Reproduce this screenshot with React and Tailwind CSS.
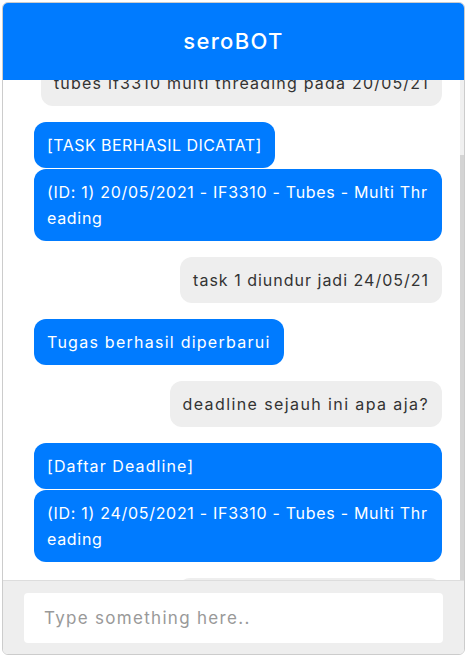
import { useEffect, useRef } from "react";

const font = { fontFamily: "Inter, 'Open Sans', sans-serif" };

function Bot({ children, full, first, track = "tracking-[1.1px]" }) {
    return (
        <div className={(first ? "mt-[16px] " : "mt-[1px] ") + "flex justify-start"}>
            <div className={(full ? "w-full " : "") + "bg-[#007bff] text-white rounded-[12px] px-[13px] py-[10px] leading-[26px] text-[16px] whitespace-nowrap " + track}>
                {children}
            </div>
        </div>
    );
}

function Me({ children, innerRef, track = "tracking-[1.1px]" }) {
    return (
        <div className="mt-[16px] flex justify-end" ref={innerRef}>
            <div className={"bg-[#eeeeee] text-[#333333] rounded-[12px] px-[13px] py-[10px] leading-[26px] text-[16px] whitespace-nowrap " + track}>
                {children}
            </div>
        </div>
    );
}

export default function App() {
    const listRef = useRef(null);
    const firstRef = useRef(null);

    useEffect(() => {
        const el = firstRef.current;
        if (listRef.current && el)
            listRef.current.scrollTop = el.offsetTop + el.offsetHeight - 26;
    }, []);

    return (
        <div className="w-[467px] h-[657px] p-[2px] bg-white" style={font}>
            <div className="w-full h-full border border-[#cccccc] rounded-[6px] flex flex-col overflow-hidden">
                <div className="h-[77px] shrink-0 bg-[#007bff] flex items-center justify-center">
                    <span className="text-white text-[22px] font-medium tracking-[1.3px]">seroBOT</span>
                </div>

                <div className="flex-1 min-h-0 flex flex-row">
                    <div
                        ref={listRef}
                        className="relative flex-1 overflow-y-scroll pl-[31px] pr-[18px] pb-[16px] [scrollbar-width:none] [&::-webkit-scrollbar]:hidden"
                    >
                        <Bot first>Halo! Ada yang bisa seroBOT bantu?</Bot>
                        <Me innerRef={firstRef} track="tracking-[1.2px]">
                            <div>halo bot, tolong catat deadline</div>
                            <div>tubes if3310 multi threading pada 20/05/21</div>
                        </Me>
                        <Bot first track="tracking-[0.45px]">[TASK BERHASIL DICATAT]</Bot>
                        <Bot full track="tracking-[0.7px]">
                            (ID: 1) 20/05/2021 - IF3310 - Tubes - Multi Thr<br />eading
                        </Bot>
                        <Me track="tracking-[1px]">task 1 diundur jadi 24/05/21</Me>
                        <Bot first track="tracking-[1.25px]">Tugas berhasil diperbarui</Bot>
                        <Me track="tracking-[1.4px]">deadline sejauh ini apa aja?</Me>
                        <Bot first full>[Daftar Deadline]</Bot>
                        <Bot full track="tracking-[0.7px]">
                            (ID: 1) 24/05/2021 - IF3310 - Tubes - Multi Thr<br />eading
                        </Bot>
                        <Me>oke makasih banyak ya bot!</Me>
                    </div>
                    {/* scrollbar */}
                    <div className="w-[4px] shrink-0 flex flex-col bg-[#f0f0f0]">
                        <div className="h-[75px] shrink-0"></div>
                        <div className="flex-1 bg-[#d4d4d4]"></div>
                    </div>
                </div>

                <div className="shrink-0 bg-[#eeeeee] border-t border-[#dddddd] pt-[12px] pb-[11px] px-[21px]">
                    <input
                        className="w-full h-[50px] bg-white rounded-[4px] px-[20px] text-[17px] tracking-[1.3px] text-[#333333] placeholder:text-[#999999] outline-none"
                        style={font}
                        placeholder="Type something here.."
                    />
                </div>
            </div>
        </div>
    );
}
